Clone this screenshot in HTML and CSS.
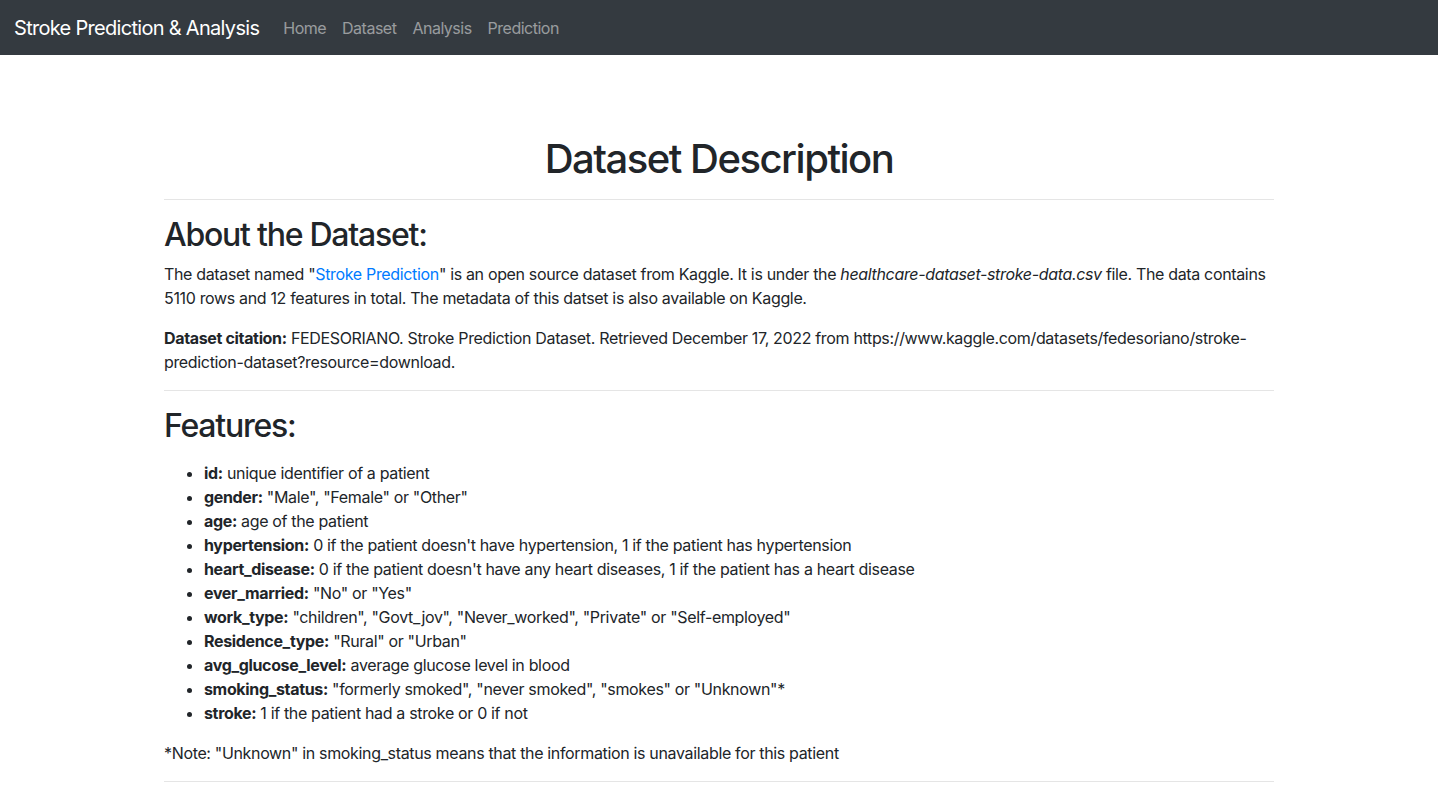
FILE: index.html
```html
<!DOCTYPE html>
<html lang="en">
<head>
<meta charset="utf-8">
<title>Dataset Description</title>
<link rel="stylesheet" href="styles.css">
</head>
<body>
<nav class="navbar">
  <a class="brand" href="#">Stroke Prediction &amp; Analysis</a>
  <ul class="nav-links">
    <li><a href="#">Home</a></li>
    <li><a href="#">Dataset</a></li>
    <li><a href="#">Analysis</a></li>
    <li><a href="#">Prediction</a></li>
  </ul>
</nav>
<main class="container">
  <h1 class="title">Dataset Description</h1>
  <hr>
  <h2>About the Dataset:</h2>
  <p>The dataset named "<a href="#">Stroke Prediction</a>" is an open source dataset from Kaggle. It is under the <em>healthcare-dataset-stroke-data.csv</em> file. The data contains 5110 rows and 12 features in total. The metadata of this datset is also available on Kaggle.</p>
  <p><strong>Dataset citation:</strong> FEDESORIANO. Stroke Prediction Dataset. Retrieved December 17, 2022 from https://www.kaggle.com/datasets/fedesoriano/stroke-prediction-dataset?resource=download.</p>
  <hr>
  <h2>Features:</h2>
  <ul class="features">
    <li><strong>id:</strong> unique identifier of a patient</li>
    <li><strong>gender:</strong> "Male", "Female" or "Other"</li>
    <li><strong>age:</strong> age of the patient</li>
    <li><strong>hypertension:</strong> 0 if the patient doesn't have hypertension, 1 if the patient has hypertension</li>
    <li><strong>heart_disease:</strong> 0 if the patient doesn't have any heart diseases, 1 if the patient has a heart disease</li>
    <li><strong>ever_married:</strong> "No" or "Yes"</li>
    <li><strong>work_type:</strong> "children", "Govt_jov", "Never_worked", "Private" or "Self-employed"</li>
    <li><strong>Residence_type:</strong> "Rural" or "Urban"</li>
    <li><strong>avg_glucose_level:</strong> average glucose level in blood</li>
    <li><strong>smoking_status:</strong> "formerly smoked", "never smoked", "smokes" or "Unknown"*</li>
    <li><strong>stroke:</strong> 1 if the patient had a stroke or 0 if not</li>
  </ul>
  <p>*Note: "Unknown" in smoking_status means that the information is unavailable for this patient</p>
  <hr>
</main>
</body>
</html>
```

FILE: styles.css
```css
* { box-sizing: border-box; }
html, body {
  margin: 0;
  padding: 0;
}
body {
  font-family: Inter, "Liberation Sans", Arial, sans-serif;
  font-size: 16px;
  line-height: 1.5;
  color: #212529;
  background: #fff;
  letter-spacing: -0.34px;
}
a { color: #007bff; text-decoration: none; }

.navbar {
  display: flex;
  align-items: center;
  background: #343a40;
  padding: 8px 14px;
  height: 55px;
}
.brand {
  color: #fff;
  font-size: 20px;
  line-height: 30px;
  margin-right: 16px;
  letter-spacing: -0.7px;
}
.nav-links {
  display: flex;
  list-style: none;
  margin: 0;
  padding: 0;
}
.nav-links a {
  display: block;
  color: rgba(255,255,255,.5);
  padding: 8px;
  line-height: 24px;
  letter-spacing: -0.5px;
}

.container {
  width: 1140px;
  margin: 0 auto;
  padding: 80px 15px 0;
}
.title {
  font-size: 40px;
  font-weight: 500;
  line-height: 48px;
  text-align: center;
  margin: 0 0 8px;
  letter-spacing: -1.5px;
}
h2 {
  font-size: 32px;
  font-weight: 500;
  line-height: 38px;
  margin: 0 0 8px;
  letter-spacing: -1.25px;
}
hr {
  border: 0;
  border-top: 1px solid rgba(0,0,0,.1);
  margin: 16px 0;
}
p { margin: 0 0 16px; }
.features {
  margin: 16px 0 16px;
  padding-left: 40px;
}
```
